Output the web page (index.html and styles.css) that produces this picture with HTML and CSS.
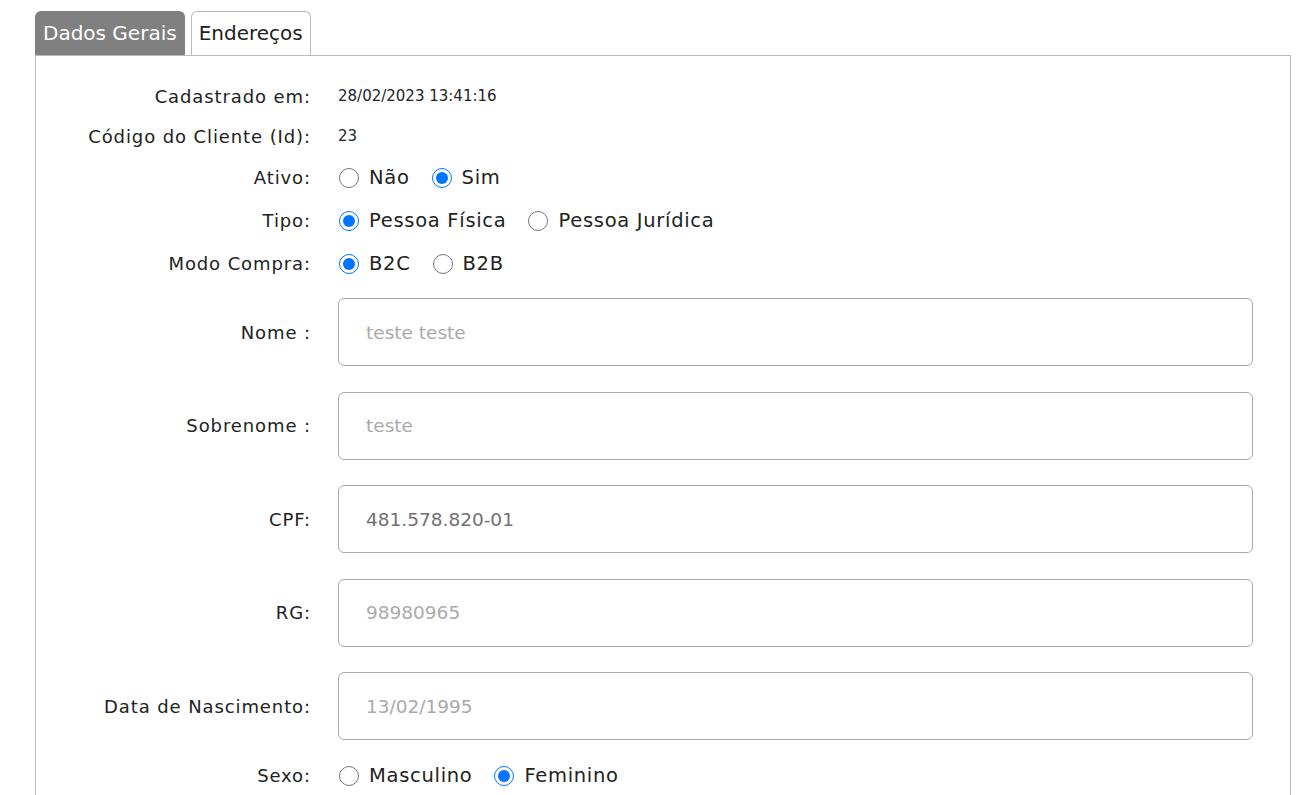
FILE: index.html
```html
<!DOCTYPE html>
<html lang="pt-BR">
<head>
    <meta charset="UTF-8">
    <meta name="viewport" content="width=device-width, initial-scale=1.0">
    <title>Cliente</title>
    <link rel="stylesheet" href="styles.css">
</head>
<body>
    <div class="page">
        <div class="tabs">
            <div class="tab active">Dados Gerais</div>
            <div class="tab">Endereços</div>
        </div>
        <div class="panel">
            <div class="row info">
                <label class="lbl">Cadastrado em:</label>
                <span class="val">28/02/2023 13:41:16</span>
            </div>
            <div class="row info">
                <label class="lbl">Código do Cliente (Id):</label>
                <span class="val">23</span>
            </div>
            <div class="row opt">
                <label class="lbl">Ativo:</label>
                <div class="radios">
                    <label class="radio"><input type="radio" name="ativo">Não</label>
                    <label class="radio"><input type="radio" name="ativo" checked>Sim</label>
                </div>
            </div>
            <div class="row opt">
                <label class="lbl">Tipo:</label>
                <div class="radios">
                    <label class="radio"><input type="radio" name="tipo" checked>Pessoa Física</label>
                    <label class="radio"><input type="radio" name="tipo">Pessoa Jurídica</label>
                </div>
            </div>
            <div class="row opt">
                <label class="lbl">Modo Compra:</label>
                <div class="radios">
                    <label class="radio"><input type="radio" name="modo" checked>B2C</label>
                    <label class="radio"><input type="radio" name="modo">B2B</label>
                </div>
            </div>
            <div class="row field">
                <label class="lbl">Nome :</label>
                <input type="text" class="txt" placeholder="teste teste">
            </div>
            <div class="row field">
                <label class="lbl">Sobrenome :</label>
                <input type="text" class="txt" placeholder="teste">
            </div>
            <div class="row field">
                <label class="lbl">CPF:</label>
                <input type="text" class="txt" value="481.578.820-01">
            </div>
            <div class="row field">
                <label class="lbl">RG:</label>
                <input type="text" class="txt" placeholder="98980965">
            </div>
            <div class="row field">
                <label class="lbl">Data de Nascimento:</label>
                <input type="text" class="txt" placeholder="13/02/1995">
            </div>
            <div class="row opt">
                <label class="lbl">Sexo:</label>
                <div class="radios">
                    <label class="radio"><input type="radio" name="sexo">Masculino</label>
                    <label class="radio"><input type="radio" name="sexo" checked>Feminino</label>
                </div>
            </div>
        </div>
    </div>
</body>
</html>
```

FILE: styles.css
```css
body {
    margin: 0;
    background: #fff;
    font-family: "DejaVu Sans", sans-serif;
    color: #212529;
}
.page {
    padding: 11px 24px 0 35px;
}
.tabs {
    display: flex;
    gap: 6px;
}
.tab {
    font-family: "DejaVu Sans", Verdana, sans-serif;
    font-size: 20px;
    height: 44px;
    line-height: 42px;
    padding: 0 7px;
    border: 1px solid #bbb;
    border-bottom: none;
    border-radius: 6px 6px 0 0;
    color: #222;
    background: #fff;
    box-sizing: border-box;
}
.tab.active {
    background: #808080;
    border-color: #808080;
    color: #fff;
}
.panel {
    border: 1px solid #bbb;
    border-bottom: none;
    padding: 20px 37px 0 0;
    min-height: 740px;
}
.row {
    display: flex;
    align-items: center;
}
.lbl {
    width: 275px;
    flex: none;
    text-align: right;
    font-size: 18px;
    letter-spacing: 0.9px;
    color: #222;
    margin-right: 27px;
}
.info {
    height: 40px;
}
.val {
    font-size: 15px;
}
.opt {
    height: 43px;
}
.radios {
    display: flex;
    gap: 21px;
}
.radio {
    display: flex;
    align-items: center;
    font-size: 19.5px;
    letter-spacing: 0.7px;
    color: #222;
}
.radio input {
    width: 20px;
    height: 20px;
    margin: 0 10px 0 1px;
}
.field {
    margin: 13px 0 0;
}
.field + .field {
    margin-top: 25.5px;
}
.field + .opt {
    margin-top: 14px;
}
.txt {
    flex: 1;
    height: 68px;
    box-sizing: border-box;
    border: 1px solid #aaa;
    border-radius: 6px;
    padding: 0 27px;
    font-family: inherit;
    font-size: 18.5px;
    color: #707070;
}
.txt::placeholder {
    color: #aaa;
}
```
